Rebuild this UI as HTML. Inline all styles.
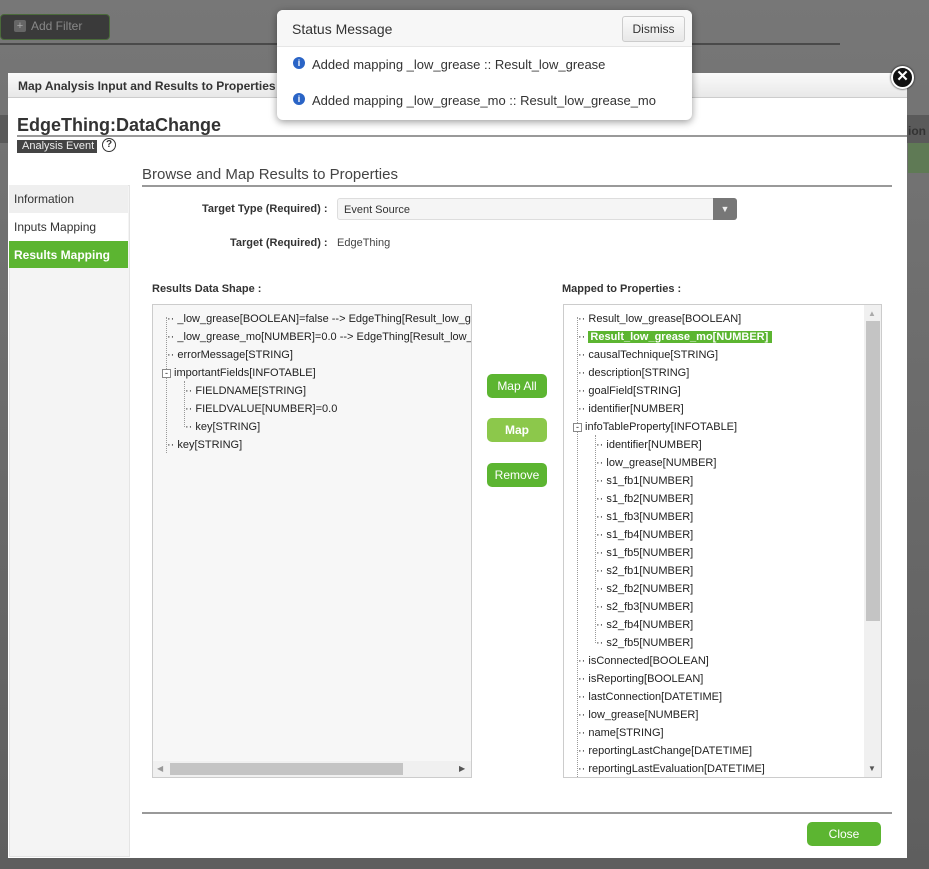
<!DOCTYPE html>
<html><head><meta charset="utf-8"><style>
*{box-sizing:border-box;margin:0;padding:0}
body{width:929px;height:869px;overflow:hidden;background:linear-gradient(#777,#5e5e5e);font-family:"Liberation Sans",sans-serif;position:relative;font-size:12px;color:#333}
.abs{position:absolute}
.tree div{position:absolute;white-space:nowrap;font-size:11px;color:#222;line-height:18px}
.btn{position:absolute;background:#5cb531;color:#fff;border-radius:5px;text-align:center;font-size:12px;line-height:24px;width:60px;height:24px}
</style></head><body>
<!-- background app -->
<div class="abs" style="left:0;top:14px;width:110px;height:26px;background:#3a3a3a;border:1px solid #4a6a3a;border-radius:4px"></div>
<div class="abs" style="left:14px;top:20px;width:12px;height:12px;background:#666;border-radius:2px;color:#aaa;font-size:11px;line-height:12px;text-align:center">+</div>
<div class="abs" style="left:31px;top:19px;color:#888;font-size:12px">Add Filter</div>
<div class="abs" style="left:0;top:43px;width:840px;height:2px;background:#4a4a4a"></div>
<div class="abs" style="left:0;top:115px;width:929px;height:28px;background:#5a5a5a"></div>
<div class="abs" style="left:908px;top:124px;color:#333;font-weight:bold;font-size:12px">ion</div>
<div class="abs" style="left:908px;top:143px;width:21px;height:30px;background:#5f7a55"></div>
<!-- modal -->
<div class="abs" style="left:8px;top:73px;width:899px;height:785px;background:#fff"></div>
<div class="abs" style="left:8px;top:73px;width:899px;height:25px;background:linear-gradient(#fafafa,#e8e8e8);border-bottom:1px solid #ccc;font-weight:bold;font-size:12px;padding:6px 10px;color:#333">Map Analysis Input and Results to Properties</div>
<div class="abs" style="left:891px;top:66px;width:23px;height:23px;border-radius:50%;background:#111;border:2px solid #fff;color:#fff;font-weight:bold;font-size:15px;line-height:18px;text-align:center;box-shadow:0 0 2px #000">✕</div>
<div class="abs" style="left:17px;top:115px;font-size:18px;font-weight:bold;color:#333">EdgeThing:DataChange</div>
<div class="abs" style="left:17px;top:135px;width:890px;height:2px;background:#999"></div>
<div class="abs" style="left:17px;top:140px;width:80px;height:13px;background:#444;color:#eee;font-size:11px;line-height:13px;padding-left:5px">Analysis Event</div>
<div class="abs" style="left:102px;top:138px;width:14px;height:14px;border:1.5px solid #333;border-radius:50%;font-size:10px;line-height:11px;text-align:center;font-weight:bold">?</div>
<!-- nav -->
<div class="abs" style="left:9px;top:185px;width:121px;height:672px;background:#f4f4f4;border:1px solid #e4e4e4"></div>
<div class="abs" style="left:9px;top:185px;width:119px;height:28px;background:#efefef;padding:7px 5px;font-size:12px">Information</div>
<div class="abs" style="left:9px;top:213px;width:119px;height:28px;background:#fff;padding:7px 5px;font-size:12px">Inputs Mapping</div>
<div class="abs" style="left:9px;top:241px;width:119px;height:27px;background:#5cb531;color:#fff;font-weight:bold;padding:7px 5px;font-size:12px">Results Mapping</div>
<!-- content -->
<div class="abs" style="left:142px;top:166px;font-size:15px;color:#444">Browse and Map Results to Properties</div>
<div class="abs" style="left:142px;top:185px;width:750px;height:2px;background:#999"></div>
<div class="abs" style="left:202px;top:203px;font-weight:bold;font-size:11px">Target Type (Required) :</div>
<div class="abs" style="left:337px;top:198px;width:400px;height:22px;background:#f5f5f5;border:1px solid #ddd;border-radius:3px;font-size:11px;padding:5px 6px">Event Source</div>
<div class="abs" style="left:713px;top:198px;width:24px;height:22px;background:#777;border-radius:0 3px 3px 0;color:#eee;font-size:9px;text-align:center;line-height:22px">▼</div>
<div class="abs" style="left:230px;top:237px;font-weight:bold;font-size:11px">Target (Required) :</div>
<div class="abs" style="left:337px;top:237px;font-size:11px;color:#444">EdgeThing</div>
<div class="abs" style="left:152px;top:283px;font-weight:bold;font-size:11px">Results Data Shape :</div>
<div class="abs" style="left:562px;top:283px;font-weight:bold;font-size:11px">Mapped to Properties :</div>
<!-- left tree -->
<div class="abs tree" style="left:152px;top:304px;width:320px;height:474px;background:#f7f7f7;border:1px solid #ccc;overflow:hidden">
<div style="left:13px;top:12px;width:1px;height:136px;border-left:1px dotted #999"></div>
<div style="left:31px;top:76px;width:1px;height:46px;border-left:1px dotted #999"></div>
<div style="left:14px;top:5px">·· _low_grease[BOOLEAN]=false --&gt; EdgeThing[Result_low_grease]</div>
<div style="left:14px;top:23px">·· _low_grease_mo[NUMBER]=0.0 --&gt; EdgeThing[Result_low_grease_mo]</div>
<div style="left:14px;top:41px">·· errorMessage[STRING]</div>
<div style="left:9px;top:59px"><span style="display:inline-block;width:9px;height:9px;border:1px solid #888;background:#fff;font-size:9px;line-height:6px;text-align:center">-</span> importantFields[INFOTABLE]</div>
<div style="left:32px;top:77px">·· FIELDNAME[STRING]</div>
<div style="left:32px;top:95px">·· FIELDVALUE[NUMBER]=0.0</div>
<div style="left:32px;top:113px">·· key[STRING]</div>
<div style="left:14px;top:131px">·· key[STRING]</div>
<div style="left:0;top:456px;width:318px;height:16px;background:#f0f0f0"></div>
<div style="left:17px;top:458px;width:233px;height:12px;background:#c4c4c4"></div>
<div style="left:4px;top:455px;color:#999;font-size:8px">◀</div>
<div style="left:306px;top:455px;color:#555;font-size:8px">▶</div>
</div>
<div class="btn" style="left:487px;top:374px">Map All</div>
<div class="btn" style="left:487px;top:418px;background:#8cc84b;font-weight:bold">Map</div>
<div class="btn" style="left:487px;top:463px">Remove</div>
<!-- right tree -->
<div class="abs tree" style="left:563px;top:304px;width:319px;height:474px;background:#fff;border:1px solid #ccc;overflow:hidden">
<div style="left:13px;top:12px;width:1px;height:460px;border-left:1px dotted #999"></div>
<div style="left:31px;top:130px;width:1px;height:208px;border-left:1px dotted #999"></div>
<div style="left:14px;top:5px">·· Result_low_grease[BOOLEAN]</div>
<div style="left:14px;top:23px">·· <span style="background:#5cb531;color:#fff;font-weight:bold;padding:0 4px 0 2px">Result_low_grease_mo[NUMBER]</span></div>
<div style="left:14px;top:41px">·· causalTechnique[STRING]</div>
<div style="left:14px;top:59px">·· description[STRING]</div>
<div style="left:14px;top:77px">·· goalField[STRING]</div>
<div style="left:14px;top:95px">·· identifier[NUMBER]</div>
<div style="left:9px;top:113px"><span style="display:inline-block;width:9px;height:9px;border:1px solid #888;background:#fff;font-size:9px;line-height:6px;text-align:center">-</span> infoTableProperty[INFOTABLE]</div>
<div style="left:32px;top:131px">·· identifier[NUMBER]</div>
<div style="left:32px;top:149px">·· low_grease[NUMBER]</div>
<div style="left:32px;top:167px">·· s1_fb1[NUMBER]</div>
<div style="left:32px;top:185px">·· s1_fb2[NUMBER]</div>
<div style="left:32px;top:203px">·· s1_fb3[NUMBER]</div>
<div style="left:32px;top:221px">·· s1_fb4[NUMBER]</div>
<div style="left:32px;top:239px">·· s1_fb5[NUMBER]</div>
<div style="left:32px;top:257px">·· s2_fb1[NUMBER]</div>
<div style="left:32px;top:275px">·· s2_fb2[NUMBER]</div>
<div style="left:32px;top:293px">·· s2_fb3[NUMBER]</div>
<div style="left:32px;top:311px">·· s2_fb4[NUMBER]</div>
<div style="left:32px;top:329px">·· s2_fb5[NUMBER]</div>
<div style="left:14px;top:347px">·· isConnected[BOOLEAN]</div>
<div style="left:14px;top:365px">·· isReporting[BOOLEAN]</div>
<div style="left:14px;top:383px">·· lastConnection[DATETIME]</div>
<div style="left:14px;top:401px">·· low_grease[NUMBER]</div>
<div style="left:14px;top:419px">·· name[STRING]</div>
<div style="left:14px;top:437px">·· reportingLastChange[DATETIME]</div>
<div style="left:14px;top:455px">·· reportingLastEvaluation[DATETIME]</div>
<div style="left:300px;top:0;width:17px;height:472px;background:#f0f0f0"></div>
<div style="left:302px;top:16px;width:14px;height:300px;background:#c4c4c4"></div>
<div style="left:304px;top:0;color:#aaa;font-size:8px">▲</div>
<div style="left:304px;top:455px;color:#555;font-size:8px">▼</div>
</div>
<div class="abs" style="left:142px;top:812px;width:750px;height:2px;background:#999"></div>
<div class="btn" style="left:807px;top:822px;width:74px;height:24px">Close</div>
<!-- status popup -->
<div class="abs" style="left:277px;top:10px;width:415px;height:110px;background:#fff;border-radius:6px;box-shadow:0 2px 8px rgba(0,0,0,.4)"></div>
<div class="abs" style="left:277px;top:10px;width:415px;height:37px;background:#f7f7f7;border-bottom:1px solid #e6e6e6;border-radius:6px 6px 0 0"></div>
<div class="abs" style="left:292px;top:21px;font-size:14px;color:#333">Status Message</div>
<div class="abs" style="left:622px;top:16px;width:63px;height:26px;background:linear-gradient(#fafafa,#e8e8e8);border:1px solid #ccc;border-radius:3px;font-size:12px;text-align:center;line-height:24px">Dismiss</div>
<div class="abs" style="left:293px;top:57px;width:12px;height:12px;border-radius:50%;background:#2a64c6;color:#fff;font-size:9px;font-weight:bold;text-align:center;line-height:12px">i</div>
<div class="abs" style="left:312px;top:57px;font-size:13px;color:#333">Added mapping _low_grease :: Result_low_grease</div>
<div class="abs" style="left:293px;top:93px;width:12px;height:12px;border-radius:50%;background:#2a64c6;color:#fff;font-size:9px;font-weight:bold;text-align:center;line-height:12px">i</div>
<div class="abs" style="left:312px;top:93px;font-size:13px;color:#333">Added mapping _low_grease_mo :: Result_low_grease_mo</div>
</body></html>
